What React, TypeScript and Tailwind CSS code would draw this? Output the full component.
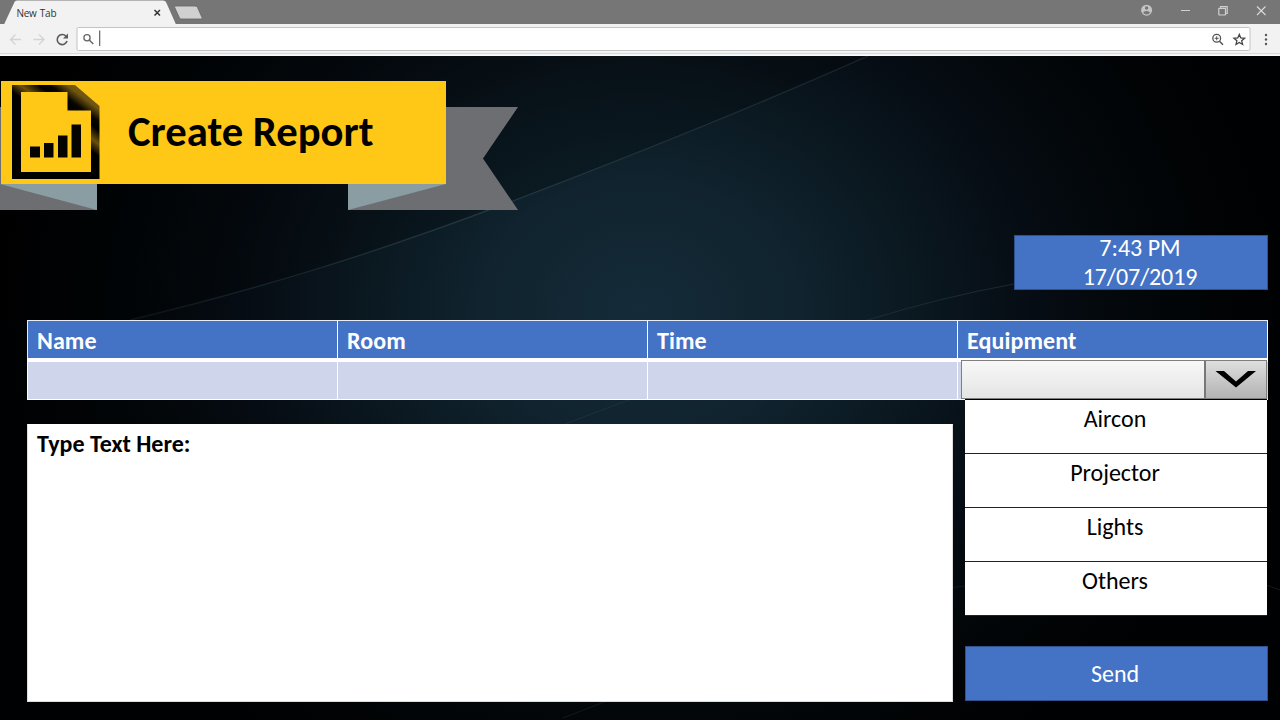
import React from "react";

const headings = ["Name", "Room", "Time", "Equipment"];
const options = ["Aircon", "Projector", "Lights", "Others"];

function Backdrop() {
  return (
    <svg className="absolute inset-0 h-full w-full" viewBox="0 56 1280 664" preserveAspectRatio="none" aria-hidden="true">
      <defs>
        <radialGradient id="glow" gradientUnits="userSpaceOnUse" cx="0" cy="0" r="1" gradientTransform="translate(640 310) scale(640 520)">
          <stop offset="0" stopColor="#152b39" />
          <stop offset="0.25" stopColor="#10232e" />
          <stop offset="0.45" stopColor="#0a171f" />
          <stop offset="0.62" stopColor="#060c13" />
          <stop offset="0.8" stopColor="#020608" />
          <stop offset="1" stopColor="#000102" />
        </radialGradient>
        <linearGradient id="streak" gradientUnits="userSpaceOnUse" x1="130" y1="0" x2="870" y2="0">
          <stop offset="0" stopColor="#24343c" stopOpacity="0.3" />
          <stop offset="0.500" stopColor="#263c47" stopOpacity="0.9" />
          <stop offset="1" stopColor="#20333c" stopOpacity="0.6" />
        </linearGradient>
      </defs>
      <rect y="56" width="1280" height="664" fill="url(#glow)" />
      <path d="M0 56 H868 C 760 104 620 160 518 199 C 370 256 250 291 130 320 H0Z" fill="#000" fillOpacity="0.22" />
      <path d="M130 320 C 250 291 370 256 518 199 C 620 160 760 104 868 56" fill="none" stroke="url(#streak)" strokeWidth="1.3" />
      <path d="M565 424 C 680 380 780 346 871 319 C 920 304 970 292 1014 284" fill="none" stroke="#20343e" strokeOpacity="0.7" strokeWidth="1.2" />
      <path d="M952 588 Q 960 586 966 586 M1266 585 L1280 590 M563 718 L604 702" fill="none" stroke="#10191f" strokeWidth="1" />
    </svg>
  );
}

function BrowserChrome() {
  return (
    <div className="relative h-14 w-full shrink-0 bg-[#f2f2f2]">
      <svg className="block h-14 w-full" viewBox="0 0 1280 56" aria-hidden="true">
        <rect width="1280" height="24" fill="#767676" />
        <path d="M4 24.5 L14.5 2 Q15 0.5 17 0.5 H163 Q165 0.5 166 2 L176 24.5Z" fill="#f2f2f2" />
        <path d="M174.500 7 Q174 6 176 6 H195 Q197 6 197.500 7.500 L202 17.500 Q202.500 19 201 19 H182 Q180 19 179.500 18Z" fill="#d0d0d0" stroke="#666" strokeWidth="0.8" />
        <path d="M154.500 10 l5.500 5.500 M160 10 l-5.500 5.500" stroke="#333" strokeWidth="1.500" />
        <g fill="none" stroke="#d4d4d4" strokeWidth="1.400">
          <path d="M21 39.500 H10.500 M15.500 34.500 l-5 5 l5 5" />
          <path d="M33.500 39.500 H44 M39 34.500 l5 5 l-5 5" />
        </g>
        <path d="M66 36.300 A5 5 0 1 0 67 41" fill="none" stroke="#5a5a5a" strokeWidth="1.600" />
        <path d="M68 33.500 V38.500 H63Z" fill="#5a5a5a" />
        <rect x="77" y="27.500" width="1173" height="23" rx="1.500" fill="#fff" stroke="#c3c3c3" />
        <circle cx="87" cy="37.800" r="3.100" fill="none" stroke="#666" strokeWidth="1.300" />
        <path d="M89.200 40 L93.300 44" stroke="#666" strokeWidth="1.500" />
        <path d="M99.700 30.500 V46" stroke="#555" strokeWidth="1.100" />
        <circle cx="1216.700" cy="38.300" r="3.900" fill="none" stroke="#555" strokeWidth="1.300" />
        <path d="M1219.500 41.200 L1223 44.700" stroke="#555" strokeWidth="1.500" />
        <path d="M1214.700 38.300 h4 M1216.700 36.300 v4" stroke="#555" strokeWidth="1" />
        <path d="M1239.300 34.500 L1240.800 38 L1244.600 38.300 L1241.700 40.800 L1242.600 44.500 L1239.300 42.500 L1236 44.500 L1236.900 40.800 L1234 38.300 L1237.800 38Z" fill="none" stroke="#444" strokeWidth="1.300" />
        <g fill="#555"><circle cx="1266" cy="35" r="1.200" /><circle cx="1266" cy="39.500" r="1.200" /><circle cx="1266" cy="44" r="1.200" /></g>
        <circle cx="1146.600" cy="10.200" r="5.500" fill="#c4c4c4" />
        <circle cx="1146.600" cy="8" r="1.700" fill="#767676" />
        <path d="M1143.200 12.800 Q1143.500 11 1146.600 11 Q1149.700 11 1150 12.800 Q1149 14.500 1146.600 14.500 Q1144.200 14.500 1143.200 12.800Z" fill="#767676" />
        <path d="M1181 10.500 H1190" stroke="#d0d0d0" />
        <g fill="none" stroke="#d0d0d0" strokeWidth="1.200"><rect x="1218.800" y="8.300" width="6.700" height="6.700" rx="0.500" /><path d="M1220.500 7.800 V6.600 H1227.200 V13.500 H1225.800" /></g>
        <path d="M1257 6.500 l8.500 8.500 M1265.500 6.500 l-8.500 8.500" stroke="#dadada" strokeWidth="1.100" />
        <path d="M0 53.800 H1280" stroke="#cfcfcf" />
        <rect y="54.300" width="1280" height="1.700" fill="#fafafa" />
      </svg>
      <span className="absolute left-[16.500px] top-[5px] font-['Open_Sans',sans-serif] text-[10px] leading-4 tracking-[-0.280px] [word-spacing:1px] text-[#333]">New Tab</span>
    </div>
  );
}

function Banner() {
  return (
    <div className="relative mt-[25px] h-[129px] w-[518px]">
      <svg className="absolute inset-0" width="518" height="129" viewBox="0 81 518 129" aria-hidden="true">
        <defs>
          <linearGradient id="sheen" gradientUnits="userSpaceOnUse" x1="90" y1="92.500" x2="60" y2="132.500">
            <stop offset="0" stopColor="#7a5c13" />
            <stop offset="0.160" stopColor="#705510" />
            <stop offset="0.360" stopColor="#080601" />
            <stop offset="0.500" stopColor="#000" />
            <stop offset="0.720" stopColor="#6b500e" />
            <stop offset="0.920" stopColor="#000" />
          </linearGradient>
        </defs>
        <path d="M0 107 H97 V210 H0Z M348 107 H518 L483 158.500 L518 210 H348Z" fill="#6d6e72" />
        <path d="M0 184 L97 210 V184Z M446 184 L348 210 V184Z" fill="#899da3" />
        <rect x="1" y="81" width="445" height="103" fill="#ffc817" />
        <path fillRule="evenodd" d="M12 85 H75 L99.500 106 V179 H12Z M21 92 V172 H91 V110.500 H67.500 V92Z" fill="url(#sheen)" />
        <path d="M30 146.500 h10 v11 h-10Z M44 143 h9.500 v14.500 h-9.500Z M58 135.500 h9.500 v22 h-9.500Z M71.500 124.500 h9.500 v33 h-9.500Z" fill="#050400" />
      </svg>
      <h1 className="absolute left-[128px] top-[24px] whitespace-nowrap text-[42.670px] font-bold leading-[52px] text-black">Create Report</h1>
    </div>
  );
}

export default function App() {
  return (
    <div className="flex h-[720px] w-[1280px] flex-col overflow-hidden bg-black font-['Carlito','Calibri','Lato',sans-serif]">
      <BrowserChrome />
      <main className="relative h-[664px]">
        <Backdrop />
        <div className="relative flex h-full flex-col">
          <Banner />
          <div className="ml-[1014px] mt-[25px] flex h-[55px] w-[254px] flex-col items-center border border-[#2f528f] bg-[#4472c4] pr-[2px] text-[24px] leading-[29px] text-white">
            <span className="-mt-[3px]">7:43 PM</span>
            <span className="tracking-[-0.150px]">17/07/2019</span>
          </div>
          <div className="ml-[27px] mt-[30px] h-[80px] w-[1241px]">
            <div className="grid h-[38px] grid-cols-4 border-l border-t border-[#e8ecf5] bg-[#4472c4]">
              {headings.map((h) => (
                <div key={h} className="border-r border-white pl-[9px] text-[24px] font-bold leading-[39px] tracking-[0.100px] text-white"><span>{h}</span></div>
              ))}
            </div>
            <div className="grid h-[42px] grid-cols-4 border-b border-l border-t-4 border-white bg-[#cfd5ea]">
              <div className="border-r border-white" />
              <div className="border-r border-white" />
              <div className="border-r border-white" />
              <div className="relative">
                <div className="absolute -top-[2px] left-[3px] flex h-[39px] w-[306px] border border-[#7f7f7f] bg-linear-to-b from-[#f8f8f8] to-[#e4e4e4]">
                  <div className="flex-1" />
                  <div className="w-[62px] border-l-2 border-[#777] bg-linear-to-b from-[#dedede] to-[#b3b3b3]">
                    <svg width="60" height="37" viewBox="0 0 60 37" aria-hidden="true"><path d="M9.500 10 H18 L30 20.500 L42 10 H50 L30 26.500Z" fill="#000" /></svg>
                  </div>
                </div>
              </div>
            </div>
          </div>
          <div className="flex pl-[27px]">
            <div className="mt-[24px] h-[278px] w-[926px] border border-[#ddd] border-t-white bg-white pl-[9px] pt-[3px] text-[24px] font-bold leading-[32px] text-black"><span>Type Text Here:</span></div>
            <div className="relative -mt-px ml-[12px] w-[303px]">
              <div className="h-[217px] w-[302px] border-t border-black bg-white">
                {options.map((o) => (
                  <div key={o} className="h-[54px] border-b border-[#222] pt-[3px] pr-[2px] text-center text-[24px] leading-[32px] text-black"><span>{o}</span></div>
                ))}
              </div>
              <button className="mt-[30px] block h-[55px] w-[303px] border border-[#2f528f] bg-[#4472c4] pr-[3px] text-[24px] leading-[53px] text-white">Send</button>
            </div>
          </div>
        </div>
      </main>
    </div>
  );
}
